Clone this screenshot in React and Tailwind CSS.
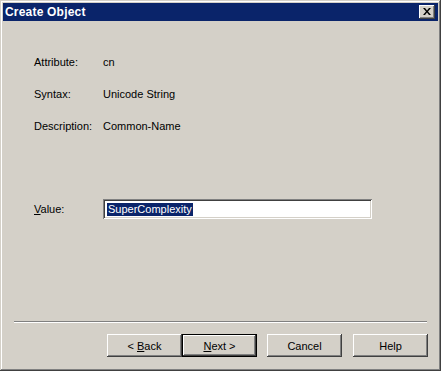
import React from "react";

const raised =
  "shadow-[inset_-1px_-1px_0_#404040,inset_1px_1px_0_#ffffff,inset_-2px_-2px_0_#808080,inset_2px_2px_0_#d4d0c8]";

function Btn({ children, def, className = "" }) {
  if (def) {
    return (
      <div className={"w-[75px] h-[23px] border border-black bg-[#d4d0c8] " + className}>
        <div className={"w-full h-full flex items-center justify-center pt-[1px] " + raised}>{children}</div>
      </div>
    );
  }
  return (
    <div className={"w-[75px] h-[23px] flex items-center justify-center pt-[1px] bg-[#d4d0c8] " + raised + " " + className}>
      {children}
    </div>
  );
}

export default function App() {
  return (
    <div
      className="w-[441px] h-[371px] bg-[#d4d0c8] p-[3px] flex flex-col text-[11px] text-black shadow-[inset_-1px_-1px_0_#404040,inset_1px_1px_0_#d4d0c8,inset_-2px_-2px_0_#808080,inset_2px_2px_0_#ffffff]"
      style={{ fontFamily: '"Liberation Sans", Arial, sans-serif' }}
    >
      <div className="h-[18px] bg-[#0a246a] flex items-center justify-between pl-[2px] pr-[3px]">
        <span className="text-white font-bold text-[12px] leading-none tracking-[0.2px]">Create Object</span>
        <div className={"w-[16px] h-[14px] bg-[#d4d0c8] flex items-center justify-center " + raised}>
          <svg width="8" height="7" viewBox="0 0 8 7" className="mt-[-1px]">
            <path d="M0 0h2l2 2.5L6 0h2L5 3.5 8 7H6L4 4.5 2 7H0l3-3.5z" fill="#000" />
          </svg>
        </div>
      </div>
      <div className="flex-1 flex flex-col pl-[31px] pt-[25px]">
        <div className="h-[32px] flex items-center">
          <span className="w-[69px]">Attribute:</span>
          <span>cn</span>
        </div>
        <div className="h-[32px] flex items-center">
          <span className="w-[69px]">Syntax:</span>
          <span>Unicode String</span>
        </div>
        <div className="h-[32px] flex items-center">
          <span className="w-[69px]">Description:</span>
          <span>Common-Name</span>
        </div>
        <div className="mt-[57px] h-[20px] flex items-center">
          <span className="w-[69px]">
            <span className="underline">V</span>alue:
          </span>
          <div className="w-[269px] h-[20px] bg-white flex items-center pl-[4px] shadow-[inset_1px_1px_0_#808080,inset_-1px_-1px_0_#ffffff,inset_2px_2px_0_#404040,inset_-2px_-2px_0_#d4d0c8]">
            <span className="bg-[#0a246a] text-white leading-[13px] px-[1px]">SuperComplexity</span>
          </div>
        </div>
        <div className="mt-[102px] ml-[-20px] w-[413px] h-[2px] border-t border-t-[#808080] border-b border-b-white" />
        <div className="mt-[11px] flex ml-[73px]">
          <Btn>
            <span className="whitespace-pre">
              {"< "}
              <span className="underline">B</span>ack
            </span>
          </Btn>
          <Btn def>
            <span className="whitespace-pre">
              <span className="underline">N</span>
              {"ext >"}
            </span>
          </Btn>
          <Btn className="ml-[10px]">Cancel</Btn>
          <Btn className="ml-[11px]">Help</Btn>
        </div>
      </div>
    </div>
  );
}
